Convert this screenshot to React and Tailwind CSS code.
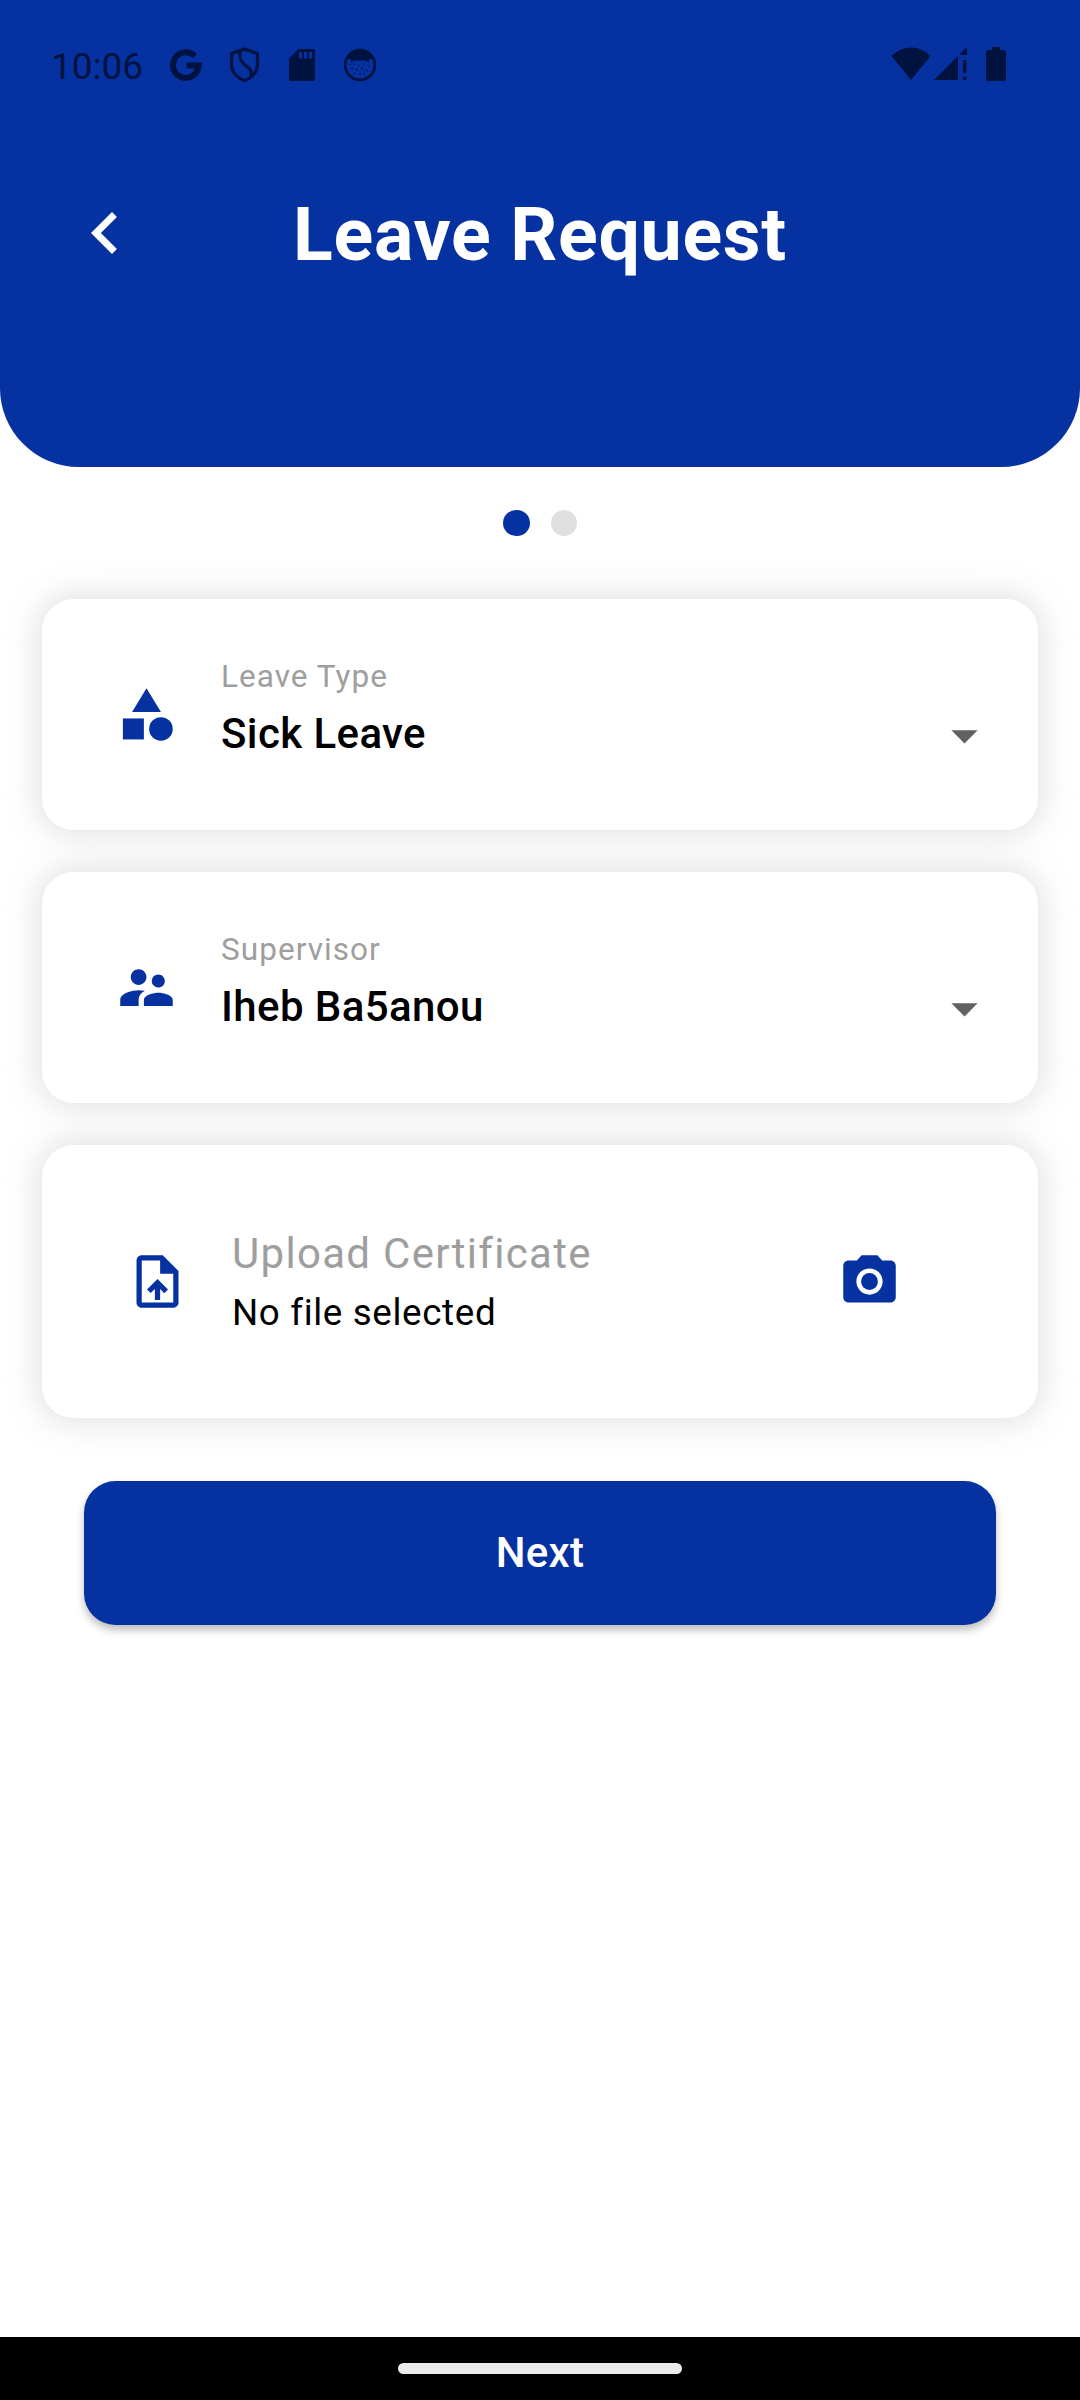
import React from "react";
import {
  MdCategory,
  MdSupervisorAccount,
  MdUploadFile,
  MdCameraAlt,
  MdArrowDropDown,
  MdChevronLeft,
} from "react-icons/md";

const card =
  "rounded-[31.5px] bg-white shadow-[0_0_31px_5px_rgba(158,158,158,0.3)] flex items-center";

function StatusBar() {
  return (
    <div className="flex h-[131px] items-start justify-between pl-[51px] pr-[74px] text-[#00123f]">
      <div className="flex h-[129px] items-center">
        <span className="w-[118px] pt-[3px] text-[37px] leading-[43px]">10:06</span>
        <svg className="h-[34px] w-[34px]" viewBox="0 0 34 34" fill="none" stroke="currentColor">
          <path d="M26 8.2A12.8 12.8 0 1 0 29.6 17.6H17.5" strokeWidth="6" />
        </svg>
        <svg className="ml-[26px] h-[36px] w-[32px]" viewBox="0 0 32 36" fill="none" stroke="currentColor" strokeWidth="3.2" strokeLinejoin="round">
          <path d="M15.500 2L28.500 6.500V17C28.500 25 23 31 15.500 33.800C8 31 2.500 25 2.500 17V6.500Z" />
          <path d="M11.500 4C9.500 11 11.500 14.500 16 18C21 21.500 24 24.500 21.500 30" />
        </svg>
        <svg className="ml-[28px] h-[32px] w-[26px]" viewBox="0 0 26 32">
          <path fill="currentColor" fillRule="evenodd" d="M9.5 0H24Q26 0 26 2V30Q26 32 24 32H2Q0 32 0 30V9.500ZM10 3V9.500H13V3ZM15 3V9.500H18V3ZM20 3V9.500H23V3Z" />
        </svg>
        <svg className="ml-[28px] h-[34px] w-[34px]" viewBox="0 0 34 34">
          <circle cx="17" cy="17" r="14.8" fill="none" stroke="currentColor" strokeWidth="2.8" />
          <path fill="currentColor" d="M4 11.500C6 6 11 2.500 17 2.500S28 6 30 11.500L26 11V14.500L22.500 12.500H11.500L8 14.500V11Z" />
          <g fill="currentColor">
            <circle cx="7" cy="16.500" r="0.800" />
            <circle cx="11" cy="16" r="0.800" />
            <circle cx="16" cy="17.500" r="0.700" />
            <circle cx="21" cy="16" r="0.800" />
            <circle cx="26" cy="18" r="0.800" />
            <circle cx="9" cy="20.500" r="0.900" />
            <circle cx="13.500" cy="21.500" r="1" />
            <circle cx="19" cy="20.500" r="0.900" />
            <circle cx="24" cy="22.500" r="0.800" />
            <circle cx="12" cy="25.500" r="0.700" />
            <circle cx="17" cy="26" r="0.900" />
            <circle cx="21.500" cy="26" r="0.700" />
          </g>
        </svg>
      </div>
      <div className="flex h-[127px] items-center">
        <svg className="h-[33px] w-[40px]" viewBox="0 0 40 33">
          <path fill="currentColor" d="M20 33L0.500 9Q9 0.500 20 0.500T39.500 9Z" />
        </svg>
        <svg className="ml-[3px] h-[33px] w-[33px]" viewBox="0 0 33 33" fill="currentColor">
          <path d="M0 33L24 9V33ZM25 8L33 0V8ZM29 13H32.500V26H29ZM29 29.500H32.500V33H29Z" />
        </svg>
        <svg className="ml-[19px] h-[34px] w-[20px]" viewBox="0 0 20 34">
          <path fill="currentColor" d="M6 0H14V3H18Q20 3 20 5V32Q20 34 18 34H2Q0 34 0 32V5Q0 3 2 3H6Z" />
        </svg>
      </div>
    </div>
  );
}

function Header() {
  return (
    <header className="h-[467px] rounded-b-[79px] bg-[#0531a1]">
      <StatusBar />
      <div className="flex h-[206px] items-center px-[63px]">
        <MdChevronLeft className="mb-[2px] h-[84px] w-[84px] text-white" />
        <h1 className="flex-1 pr-[84px] pt-[2px] text-center text-[73.5px] font-bold leading-[86px] tracking-[0.7px] text-white">
          Leave Request
        </h1>
      </div>
    </header>
  );
}

function SelectCard({ icon: Icon, label, value }) {
  return (
    <div className={`${card} h-[231px] pl-[73px] pr-[42px]`}>
      <Icon className="h-[63px] w-[63px] shrink-0 text-[#0531a1]" />
      <div className="mb-[11px] ml-[43px] flex-1">
        <div className="text-[31.5px] leading-[38px] tracking-[1.05px] text-[#9e9e9e]">{label}</div>
        <div className="mt-[13px] text-[42px] font-medium leading-[50px] tracking-[0.4px] text-black">{value}</div>
      </div>
      <MdArrowDropDown className="mt-[42px] h-[63px] w-[63px] shrink-0 text-[#616161]" />
    </div>
  );
}

function UploadCard() {
  return (
    <div className={`${card} h-[273px] pl-[84px] pr-[137px]`}>
      <MdUploadFile className="h-[63px] w-[63px] shrink-0 text-[#0531a1]" />
      <div className="ml-[43px] flex-1 pt-[2px]">
        <div className="text-[42px] leading-[50px] tracking-[1.3px] text-[#9e9e9e]">Upload Certificate</div>
        <div className="mt-[12px] text-[36.75px] leading-[44px] tracking-[0.65px] text-black">No file selected</div>
      </div>
      <MdCameraAlt className="h-[63px] w-[63px] shrink-0 text-[#0531a1]" />
    </div>
  );
}

export default function App() {
  return (
    <div className="flex h-[2400px] w-[1080px] flex-col bg-white font-['Roboto',sans-serif]">
      <Header />
      <div className="mt-[42.5px] flex justify-center gap-[21px]">
        <span className="h-[26.25px] w-[26.25px] rounded-full bg-[#0531a1]" />
        <span className="h-[26.25px] w-[26.25px] rounded-full bg-[#e0e0e0]" />
      </div>
      <main className="mt-[63px] flex flex-1 flex-col gap-[42px] px-[42px]">
        <SelectCard icon={MdCategory} label="Leave Type" value="Sick Leave" />
        <SelectCard icon={MdSupervisorAccount} label="Supervisor" value="Iheb Ba5anou" />
        <UploadCard />
        <button className="mx-[42px] mt-[21px] h-[144px] rounded-[31.5px] bg-[#0531a1] text-[42px] font-medium leading-[50px] tracking-[0.3px] text-white shadow-[0_5px_8px_rgba(0,0,0,0.26)]">
          Next
        </button>
      </main>
      <footer className="flex h-[63px] items-center justify-center bg-black">
        <div className="h-[11px] w-[284px] rounded-full bg-[#ebebeb]" />
      </footer>
    </div>
  );
}
